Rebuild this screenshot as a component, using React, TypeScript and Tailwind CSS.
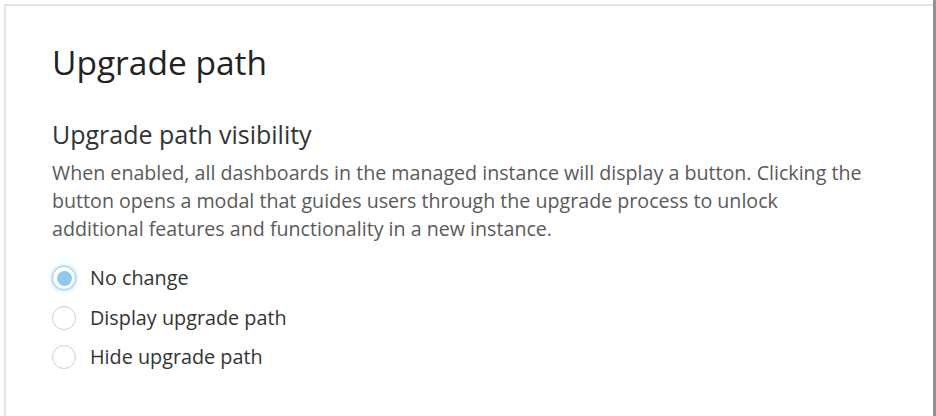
import { useState } from "react";

const options = [
  { id: "none", label: "No change" },
  { id: "display", label: "Display upgrade path" },
  { id: "hide", label: "Hide upgrade path" },
];

function Radio({ checked }: { checked: boolean }) {
  if (checked) {
    return (
      <span className="flex h-[24px] w-[24px] shrink-0 items-center justify-center rounded-full border border-[#9fd0f3] bg-white shadow-[0_0_3px_1px_rgba(120,190,240,0.55)]">
        <span className="h-[15px] w-[15px] rounded-full bg-[#8ec9ef]" />
      </span>
    );
  }
  return (
    <span className="h-[24px] w-[24px] shrink-0 rounded-full border border-[#cfcfcf] bg-white" />
  );
}

export default function App() {
  const [value, setValue] = useState("none");

  return (
    <div
      className="h-[416px] w-[936px] overflow-hidden bg-white pt-[4px] pl-[4px]"
      style={{ fontFamily: '"Open Sans", "Noto Sans", sans-serif' }}
    >
      <div className="flex h-full border-t-[2px] border-l-[2px] border-[#e3e3e3]">
        <div className="flex-1 pt-[36px] pl-[46px]">
          <h1 className="text-[33.5px] leading-[40px] text-[#222]">Upgrade path</h1>

          <h2 className="mt-[37px] text-[25px] leading-[30px] text-[#333]">
            Upgrade path visibility
          </h2>
          <p className="mt-[10px] whitespace-nowrap text-[19.65px] leading-[28px] text-[#5a5a5a]">
            When enabled, all dashboards in the managed instance will display a button. Clicking the
            <br />
            button opens a modal that guides users through the upgrade process to unlock
            <br />
            additional features and functionality in a new instance.
          </p>

          <div className="mt-[23px] flex flex-col gap-[15.5px]">
            {options.map((o) => (
              <label
                key={o.id}
                className="flex cursor-pointer items-center gap-[14px] text-[19.8px] leading-[24px] text-[#333]"
                onClick={() => setValue(o.id)}
              >
                <Radio checked={value === o.id} />
                <span>{o.label}</span>
              </label>
            ))}
          </div>
        </div>
        <div className="w-[3px] shrink-0 -mt-[6px] bg-[#929292]" />
      </div>
    </div>
  );
}
